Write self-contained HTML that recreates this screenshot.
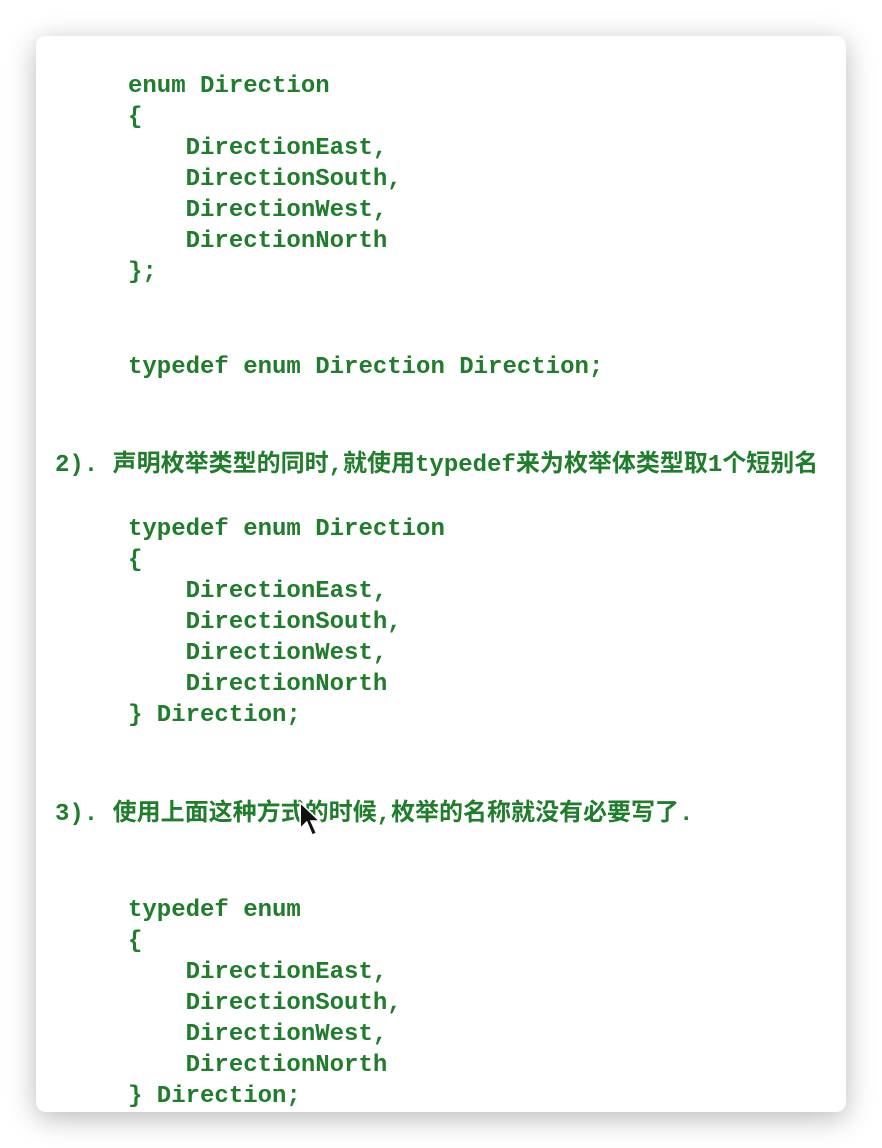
<!DOCTYPE html>
<html><head><meta charset="utf-8"><style>
html,body{margin:0;padding:0;background:#fff;width:882px;height:1148px;overflow:hidden}
.card{position:absolute;left:36px;top:36px;width:810px;height:1076px;background:#fff;border-radius:10px;box-shadow:0 6px 28px rgba(0,0,0,0.28)}
.t{position:absolute;font-family:"Liberation Mono","Noto Sans CJK SC",monospace;font-weight:bold;font-size:24px;line-height:31px;color:#1f7d2b;white-space:pre;margin:0}
.h{font-family:"Liberation Mono","Noto Sans CJK SC",monospace;}
</style></head><body>
<div class="card"></div>
<pre class="t" style="left:128px;top:71px">enum Direction
{
    DirectionEast,
    DirectionSouth,
    DirectionWest,
    DirectionNorth
};</pre>
<pre class="t" style="left:128px;top:352px">typedef enum Direction Direction;</pre>
<pre class="t h" style="left:55px;top:450px">2). 声明枚举类型的同时,就使用typedef来为枚举体类型取1个短别名</pre>
<pre class="t" style="left:128px;top:514px">typedef enum Direction
{
    DirectionEast,
    DirectionSouth,
    DirectionWest,
    DirectionNorth
} Direction;</pre>
<pre class="t h" style="left:55px;top:799px">3). 使用上面这种方式的时候,枚举的名称就没有必要写了.</pre>
<pre class="t" style="left:128px;top:895px">typedef enum
{
    DirectionEast,
    DirectionSouth,
    DirectionWest,
    DirectionNorth
} Direction;</pre>
<svg style="position:absolute;left:298px;top:800px" width="24" height="40" viewBox="0 0 22 36"><path d="M2 2 L2 26 L8 20 L13 32 L17 30 L12 19 L20 19 Z" fill="#111" stroke="#fff" stroke-width="1.5"/></svg>
</body></html>
